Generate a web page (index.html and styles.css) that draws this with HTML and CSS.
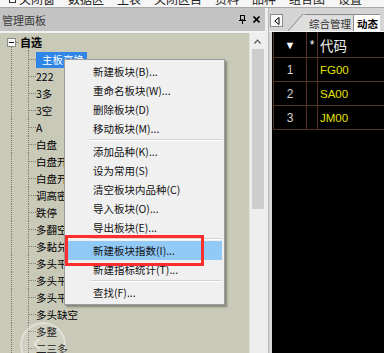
FILE: index.html
```html
<!DOCTYPE html>
<html lang="zh-CN">
<head>
    <meta charset="UTF-8">
    <meta name="viewport" content="width=device-width, initial-scale=1.0">
    <title>管理面板</title>
    <link rel="stylesheet" href="styles.css">
</head>
<body>
<div class="app">
    <div class="toolbar">
        <span class="tool"><b class="tool-icon"></b>关闭窗</span>
        <span class="tool">数据区</span>
        <span class="tool">主表</span>
        <span class="tool">关闭区目</span>
        <span class="tool">资料</span>
        <span class="tool">品种</span>
        <span class="tool">组合图</span>
        <span class="tool">设置</span>
    </div>

    <div class="main">
        <div class="left-panel">
            <div class="panel-head">
                <span class="panel-title">管理面板</span>
                <span class="panel-btns">
                    <svg width="7" height="9" viewBox="0 0 7 9"><rect x="1.5" y="0.5" width="4" height="4.5" fill="none" stroke="#000"/><rect x="0" y="5" width="7" height="1" fill="#000"/><rect x="3" y="6" width="1" height="3" fill="#000"/></svg>
                    <svg width="7" height="7" viewBox="0 0 7 7"><path d="M0.5 0.5L6.5 6.5M6.5 0.5L0.5 6.5" stroke="#000" stroke-width="1.6"/></svg>
                </span>
            </div>
            <div class="panel-body">
                <div class="tree">
                    <div class="node node-root"><span class="expander"></span><span class="label label-bold">自选</span></div>
                    <div class="node"><span class="label label-sel">主板高换</span></div>
                    <div class="node"><span class="label">222</span></div>
                    <div class="node"><span class="label">3多</span></div>
                    <div class="node"><span class="label">3空</span></div>
                    <div class="node"><span class="label">A</span></div>
                    <div class="node"><span class="label">白盘</span></div>
                    <div class="node"><span class="label">白盘开</span></div>
                    <div class="node"><span class="label">白盘开</span></div>
                    <div class="node"><span class="label">调高密</span></div>
                    <div class="node"><span class="label">跌停</span></div>
                    <div class="node"><span class="label">多翻空</span></div>
                    <div class="node"><span class="label">多黏兑</span></div>
                    <div class="node"><span class="label">多头平</span></div>
                    <div class="node"><span class="label">多头平</span></div>
                    <div class="node"><span class="label">多头平</span></div>
                    <div class="node"><span class="label">多头缺空</span></div>
                    <div class="node"><span class="label">多整</span></div>
                    <div class="node"><span class="label">二三多</span></div>
                </div>
                <div class="vscroll">
                    <div class="scroll-up">
                        <svg width="7" height="5" viewBox="0 0 7 5"><path d="M0.5 4.5L3.5 1.2L6.5 4.5" fill="none" stroke="#555" stroke-width="1.2"/></svg>
                    </div>
                    <div class="scroll-thumb"></div>
                </div>
            </div>
        </div>

        <div class="splitter"></div>

        <div class="right-panel">
            <div class="tabbar">
                <span class="tab-nav">
                    <svg width="6" height="8" viewBox="0 0 6 8"><path d="M5 0.5L0.8 4L5 7.5Z" fill="none" stroke="#000" stroke-width="1"/></svg>
                </span>
                <span class="tab-slant">
                    <svg width="17" height="17" viewBox="0 0 17 17"><path d="M0 17L15 0H17V17Z" fill="#dedede"/><path d="M0 17L15 0H17" fill="none" stroke="#8a8a8a"/></svg>
                </span>
                <span class="tab">综合管理</span>
                <span class="tab tab-active">动态</span>
            </div>
            <div class="grid">
                <div class="grow ghead">
                    <span class="gc c-sort">▼</span>
                    <span class="gc c-star">*</span>
                    <span class="gc c-code">代码</span>
                </div>
                <div class="grow">
                    <span class="gc c-num">1</span>
                    <span class="gc"></span>
                    <span class="gc c-code c-yellow">FG00</span>
                </div>
                <div class="grow">
                    <span class="gc c-num">2</span>
                    <span class="gc"></span>
                    <span class="gc c-code c-yellow">SA00</span>
                </div>
                <div class="grow">
                    <span class="gc c-num">3</span>
                    <span class="gc"></span>
                    <span class="gc c-code c-yellow">JM00</span>
                </div>
            </div>
        </div>
    </div>

    <div class="context-menu">
        <div class="menu-item">新建板块(B)...</div>
        <div class="menu-item">重命名板块(W)...</div>
        <div class="menu-item">删除板块(D)</div>
        <div class="menu-item">移动板块(M)...</div>
        <div class="menu-sep"></div>
        <div class="menu-item">添加品种(K)...</div>
        <div class="menu-item">设为常用(S)</div>
        <div class="menu-item">清空板块内品种(C)</div>
        <div class="menu-item">导入板块(O)...</div>
        <div class="menu-item">导出板块(E)...</div>
        <div class="menu-sep"></div>
        <div class="menu-item menu-item-hover">新建板块指数(I)...</div>
        <div class="menu-item">新建指标统计(T)...</div>
        <div class="menu-sep"></div>
        <div class="menu-item">查找(F)...</div>
    </div>

    <div class="mark"></div>

    <div class="float-back">
        <svg width="8" height="12" viewBox="0 0 8 12"><path d="M6.5 1L1.5 6L6.5 11" fill="none" stroke="rgba(255,255,255,0.55)" stroke-width="1.6"/></svg>
    </div>
</div>
</body>
</html>
```

FILE: styles.css
```css
* {
    box-sizing: border-box;
}

:root {
    --tree-bg: #c9c9b8;
    --tree-line: #7c7c70;
    --grid-line: #553322;
    --font-family: "Noto Sans CJK SC", "Noto Sans", sans-serif;
}

body {
    margin: 0;
    width: 384px;
    height: 353px;
    overflow: hidden;
    font-family: var(--font-family);
    font-size: 10.5px;
    color: #000;
    background: #f0f0f0;
}

.app {
    position: relative;
    width: 384px;
    height: 353px;
    display: flex;
    flex-direction: column;
}

/* top toolbar, only its bottom edge is visible */
.toolbar {
    flex: none;
    height: 8px;
    background: #f5f5f5;
    border-bottom: 1px solid #a9a9a9;
    overflow: hidden;
    display: flex;
    gap: 13px;
    padding-left: 9px;
}

.tool {
    display: flex;
    align-items: center;
    gap: 3px;
    height: 14px;
    margin-top: -9px;
    font-size: 12px;
    color: #222;
    white-space: nowrap;
}

.tool-icon {
    width: 7px;
    height: 9px;
    border: 1px solid #333;
    background: #fff;
}

.main {
    flex: 1;
    display: flex;
    min-height: 0;
}

/* left panel */
.left-panel {
    width: 265px;
    display: flex;
    flex-direction: column;
}

.panel-head {
    height: 23px;
    flex: none;
    background: #c3c3c3;
    display: flex;
    align-items: center;
    justify-content: space-between;
    padding: 0 5px 0 2px;
}

.panel-title {
    font-size: 11px;
    color: #3c3c3c;
}

.panel-btns {
    display: flex;
    align-items: center;
    gap: 7px;
}

.panel-body {
    flex: 1;
    display: flex;
    border-top: 2px solid #f2f2f2;
    min-height: 0;
}

.tree {
    flex: 1;
    background: var(--tree-bg);
    padding-top: 1px;
    overflow: hidden;
}

.node {
    height: 17px;
    display: flex;
    align-items: center;
    padding-left: 36px;
    white-space: nowrap;
    background:
        repeating-linear-gradient(var(--tree-line) 0 1px, transparent 1px 2px) 11px 0 / 1px 100% no-repeat,
        repeating-linear-gradient(var(--tree-line) 0 1px, transparent 1px 2px) 28px 0 / 1px 100% no-repeat,
        repeating-linear-gradient(90deg, var(--tree-line) 0 1px, transparent 1px 2px) 29px 8px / 7px 1px no-repeat;
}

.node-root {
    padding-left: 7px;
    background:
        repeating-linear-gradient(var(--tree-line) 0 1px, transparent 1px 2px) 11px 13px / 1px 4px no-repeat,
        repeating-linear-gradient(var(--tree-line) 0 1px, transparent 1px 2px) 28px 14px / 1px 3px no-repeat,
        repeating-linear-gradient(90deg, var(--tree-line) 0 1px, transparent 1px 2px) 16px 8px / 4px 1px no-repeat;
}

.expander {
    width: 9px;
    height: 9px;
    margin-right: 4px;
    border: 1px solid #8a8a8a;
    background: linear-gradient(#1a1a1a, #1a1a1a) center / 5px 1px no-repeat, #fafafa;
}

.label {
    line-height: 15px;
}

.label-bold {
    font-weight: bold;
    font-size: 11px;
}

.label-sel {
    background: #2f86e8;
    color: #fff;
    padding: 0 3px 0 6px;
    height: 16px;
}

.vscroll {
    width: 16px;
    flex: none;
    background: #eeeeee;
    border-left: 1px solid #e2e2e2;
    display: flex;
    flex-direction: column;
    align-items: center;
}

.scroll-up {
    height: 16px;
    display: flex;
    align-items: center;
    justify-content: center;
}

.scroll-thumb {
    width: 12px;
    height: 160px;
    background: #cdcdcd;
}

.splitter {
    width: 4px;
    background: #ededed;
    border-right: 1px solid #b8b8b8;
}

/* right panel */
.right-panel {
    flex: 1;
    display: flex;
    flex-direction: column;
    background: #d8d8d8;
    min-width: 0;
}

.tabbar {
    height: 24px;
    flex: none;
    display: flex;
    align-items: flex-end;
    background: #d4d4d4;
    border-bottom: 1px solid #f4f4f4;
    white-space: nowrap;
    overflow: hidden;
}

.tab-nav {
    width: 13px;
    height: 13px;
    margin: 0 5px 4px 1px;
    border: 1px solid #8c8c8c;
    background: #f7f7f7;
    display: flex;
    align-items: center;
    justify-content: center;
}

.tab-slant {
    height: 17px;
    display: flex;
}

.tab {
    height: 17px;
    display: flex;
    align-items: center;
    padding: 0 2px 0 4px;
    background: #dedede;
    border-top: 1px solid #8a8a8a;
    color: #303030;
}

.tab-active {
    background: #fff;
    border-left: 1px solid #8a8a8a;
    font-weight: bold;
    color: #000;
    padding-left: 3px;
}

.grid {
    flex: 1;
    margin-left: 3px;
    padding-left: 1px;
    background: #000;
    font-family: "Liberation Sans", Arial, sans-serif;
}

.grow {
    display: grid;
    grid-template-columns: 33px 11px 1fr;
    height: 24px;
    border-left: 1px solid var(--grid-line);
    border-bottom: 1px solid var(--grid-line);
}

.ghead {
    height: 26px;
}

.gc {
    display: flex;
    align-items: center;
    border-right: 1px solid var(--grid-line);
    color: #d4d4d4;
    font-size: 12px;
}

.c-sort,
.c-num {
    justify-content: center;
}

.c-sort {
    color: #fff;
    font-size: 11px;
    padding-top: 1px;
}

.c-star {
    justify-content: center;
    color: #fff;
    font-size: 12px;
}

.c-code {
    padding-left: 2px;
    border-right: none;
}

.ghead .c-code {
    font-family: var(--font-family);
    font-size: 13.5px;
    color: #f0f0f0;
}

.c-yellow {
    color: #e2e200;
    font-size: 11.5px;
}

/* context menu */
.context-menu {
    position: absolute;
    left: 64px;
    top: 59px;
    width: 161px;
    padding: 2px;
    background: #f0f0f0;
    border: 1px solid #9c9c9c;
    box-shadow: 2px 2px 2px rgba(0, 0, 0, 0.35);
}

.menu-item {
    height: 19px;
    line-height: 19px;
    padding-left: 26px;
    white-space: nowrap;
    color: #111;
}

.menu-item-hover {
    background: #91c9f7;
}

.menu-sep {
    height: 4px;
    margin-left: 23px;
    background: linear-gradient(#d5d5d5, #d5d5d5) 0 1px / 100% 1px no-repeat,
        linear-gradient(#fff, #fff) 0 2px / 100% 1px no-repeat;
}

/* annotation frame around the highlighted item */
.mark {
    position: absolute;
    left: 65px;
    top: 235px;
    width: 139px;
    height: 31px;
    border: 3px solid #ff2e2e;
}

/* floating back button */
.float-back {
    position: absolute;
    left: 20px;
    top: 322px;
    width: 46px;
    height: 46px;
    border-radius: 50%;
    background: rgba(255, 255, 255, 0.13);
    border: 2px solid rgba(255, 255, 255, 0.35);
    display: flex;
    align-items: flex-start;
    justify-content: flex-start;
    padding: 14px 0 0 11px;
}
```
